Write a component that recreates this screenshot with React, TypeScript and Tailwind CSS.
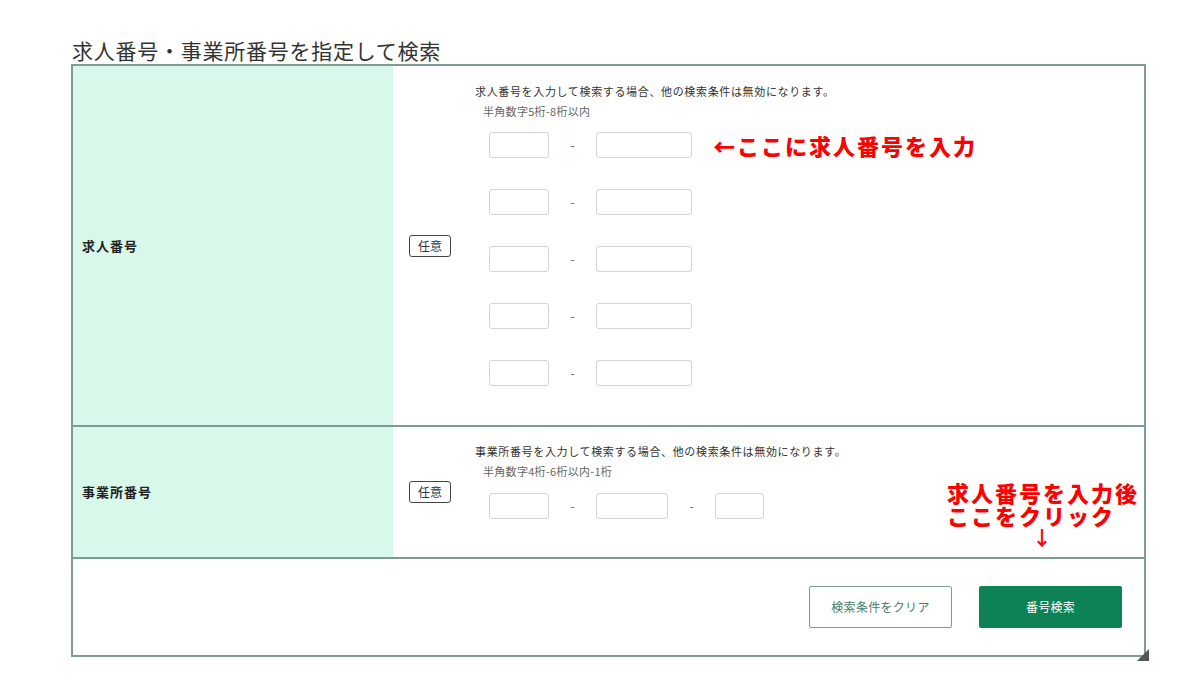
import React from 'react';

const font = { fontFamily: '"Noto Sans CJK JP", "Noto Sans", sans-serif' };

function Field({ w }: { w: string }) {
  return <input type="text" className={`h-[26px] ${w} rounded-[3px] border border-[#d4d4d4] bg-white outline-none`} />;
}

function Dash() {
  return <span className="flex w-[47px] justify-center text-[12px] text-[#555]">-</span>;
}

function Badge() {
  return (
    <span className="flex h-[22px] w-[42px] items-center justify-center rounded-[3px] border border-[#444] text-[12px] text-[#333]">
      任意
    </span>
  );
}

export default function App() {
  const rows = [0, 1, 2, 3, 4];

  return (
    <div className="min-h-[698px] w-[1201px] bg-white pt-[36px] text-[#333]" style={font}>
      <h1 className="ml-[72px] h-[28px] text-[21px] leading-[28px] tracking-[0.75px] text-[#333]">
        求人番号・事業所番号を指定して検索
      </h1>

      <div className="relative ml-[71px] w-[1075px] border-2 border-[#7d9c92]">
        {/* 求人番号 */}
        <div className="flex h-[361px] border-b-2 border-[#7d9c92]">
          <div className="flex w-[320px] items-center bg-[#d8f8ea] pl-[9px] text-[13px] font-bold tracking-[1px] text-[#222]">
            求人番号
          </div>
          <div className="flex items-center pl-[16px]">
            <Badge />
          </div>
          <div className="pl-[24px] pt-[15px]">
            <p className="text-[11px] leading-[20px] tracking-[0.65px] text-[#333]">
              求人番号を入力して検索する場合、他の検索条件は無効になります。
            </p>
            <p className="pl-[8px] text-[11px] leading-[20px] tracking-[0.3px] text-[#666]">半角数字5桁-8桁以内</p>
            <div className="mt-[11px] flex flex-col gap-[31px] pl-[14px]">
              {rows.map((r) => (
                <div key={r} className="flex items-center">
                  <Field w="w-[60px]" />
                  <Dash />
                  <Field w="w-[96px]" />
                  {r === 0 && (
                    <span className="ml-[21px] text-[22px] font-black leading-[26px] tracking-[2px] text-[#ff0000]">
                      ←ここに求人番号を入力
                    </span>
                  )}
                </div>
              ))}
            </div>
          </div>
        </div>

        {/* 事業所番号 */}
        <div className="relative flex h-[132px] border-b-2 border-[#7d9c92]">
          <div className="flex w-[320px] items-center bg-[#d8f8ea] pl-[9px] text-[13px] font-bold tracking-[1px] text-[#222]">
            事業所番号
          </div>
          <div className="flex items-center pl-[16px]">
            <Badge />
          </div>
          <div className="pl-[24px] pt-[14px]">
            <p className="text-[11px] leading-[20px] tracking-[0.65px] text-[#333]">
              事業所番号を入力して検索する場合、他の検索条件は無効になります。
            </p>
            <p className="pl-[8px] text-[11px] leading-[20px] tracking-[0.3px] text-[#666]">半角数字4桁-6桁以内-1桁</p>
            <div className="mt-[12px] flex items-center pl-[14px]">
              <Field w="w-[60px]" />
              <Dash />
              <Field w="w-[72px]" />
              <Dash />
              <Field w="w-[49px]" />
            </div>
          </div>

          <div className="absolute left-[874px] top-[54px] text-[22px] font-black leading-[23px] tracking-[2px] text-[#ff0000]">
            <div>求人番号を入力後</div>
            <div>ここをクリック</div>
            <div className="pl-[85px] text-[20px] font-bold leading-[22px]">↓</div>
          </div>
        </div>

        {/* buttons */}
        <div className="flex h-[96px] items-center justify-end gap-[27px] pr-[22px]">
          <button className="flex h-[42px] w-[143px] items-center justify-center rounded-[2px] border border-[#7d9c92] bg-white text-[12px] tracking-[0.3px] text-[#4a7c6a]">
            検索条件をクリア
          </button>
          <button className="flex h-[42px] w-[143px] items-center justify-center rounded-[2px] bg-[#0d8254] text-[12px] tracking-[0.3px] text-white">
            番号検索
          </button>
        </div>

        <svg className="absolute bottom-[-6px] right-[-5px]" width="12" height="12" viewBox="0 0 12 12">
          <polygon points="12,0 12,12 0,12" fill="#555" />
        </svg>
      </div>
    </div>
  );
}
